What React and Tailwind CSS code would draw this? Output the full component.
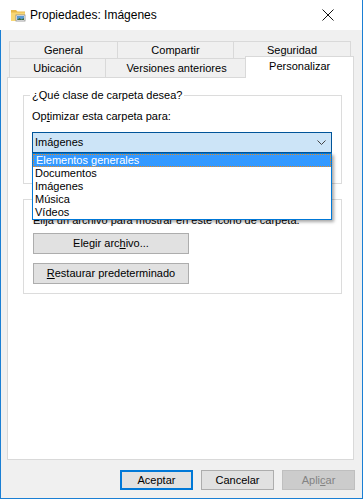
import React from "react";

const row1 = [
  { label: "General", w: "w-[109px]" },
  { label: "Compartir", w: "w-[117px]" },
  { label: "Seguridad", w: "w-[118px]" },
];

const items = ["Elementos generales", "Documentos", "Imágenes", "Música", "Vídeos"];

const FolderIcon = () => (
  <svg width="16" height="16" viewBox="0 0 16 16">
    <path d="M1 3h5l1.5 1.5H15V14H1z" fill="#e8b84a" />
    <path d="M1 5.5h14V14H1z" fill="#f8d775" />
    <rect x="6" y="8" width="9" height="6" fill="#fff" stroke="#8a8a8a" strokeWidth="0.8" />
    <rect x="7" y="9" width="7" height="4" fill="#5a9bd5" />
    <path d="M7 13l2.5-2 2 1.5L14 11v2z" fill="#3d6b3a" />
  </svg>
);

const Btn = ({ children, className = "" }) => (
  <div
    className={`h-[21px] w-[156px] flex items-center justify-center border border-[#adadad] bg-[#e1e1e1] ${className}`}
  >
    {children}
  </div>
);

export default function App() {
  return (
    <div className="w-[364px] h-[499px] bg-white flex font-['Liberation_Sans',Arial,sans-serif] text-[11px] text-black leading-[13px]">
      <div className="w-[363px] h-[499px] flex flex-col border-r border-b border-[#1a7fd4]">
        {/* title bar */}
        <div className="h-[30px] bg-white flex items-center pl-[10px] pr-[28px] shrink-0">
          <FolderIcon />
          <span className="ml-[4px] text-[12px] text-black">Propiedades: Imágenes</span>
          <div className="flex-1" />
          <svg width="12" height="12" viewBox="0 0 12 12">
            <path d="M0.5 0.5l11 11M11.5 0.5l-11 11" stroke="#111" strokeWidth="1" />
          </svg>
        </div>

        {/* body */}
        <div className="flex-1 bg-[#f0f0f0] border-l border-[#1a7fd4] flex flex-col pl-[6px] pr-[8px] pt-[11px] pb-[8px]">
          {/* tabs */}
          <div className="pl-[2px]">
            <div className="flex h-[17px]">
              {row1.map((t, i) => (
                <div
                  key={t.label}
                  className={`${t.w} h-[17px] border border-b-0 border-[#d9d9d9] flex items-center justify-center ${i > 0 ? "-ml-px" : ""}`}
                >
                  {t.label}
                </div>
              ))}
            </div>
            <div className="flex h-[19px] items-end">
              <div className="w-[97px] h-[19px] border border-b-0 border-[#d9d9d9] flex items-center justify-center">
                Ubicación
              </div>
              <div className="w-[144px] h-[19px] -ml-px border border-b-0 border-[#d9d9d9] flex items-center justify-center">
                Versiones anteriores
              </div>
              <div className="relative z-10 w-[109px] h-[22px] -ml-[3px] -mb-px bg-white border border-b-0 border-[#d9d9d9] flex items-start justify-center pt-[3px]">
                Personalizar
              </div>
            </div>
          </div>

          {/* panel */}
          <div className="h-[383px] bg-white border border-[#d9d9d9] pl-[15px] pt-[17px]">
            {/* group 1 */}
            <div className="relative w-[319px] h-[89px] border border-[#dcdcdc] pl-[8px] pt-[14px]">
              <span className="absolute -top-[7px] left-[6px] bg-white px-[2px]">¿Qué clase de carpeta desea?</span>
              <div>
                Op<span className="underline">t</span>imizar esta carpeta para:
              </div>
              <div className="relative mt-[9px] w-[300px] z-20">
                <div className="h-[21px] border border-[#005499] bg-[#cce4f7] flex items-center pl-[2px] pr-[5px]">
                  <span>Imágenes</span>
                  <div className="flex-1" />
                  <svg width="9" height="5" viewBox="0 0 9 5">
                    <path d="M0.5 0.5l4 4 4-4" stroke="#444" strokeWidth="1" fill="none" />
                  </svg>
                </div>
                <div className="absolute top-full left-0 w-[300px] h-[67px] bg-white border border-[#0078d7] shadow-[2px_2px_3px_rgba(0,0,0,0.35)]">
                  {items.map((it, i) => (
                    <div
                      key={it}
                      className={`h-[13px] flex items-center pl-[2px] ${
                        i === 0 ? "bg-[#3399ff] text-white border border-dotted border-[#e88a1f] pl-[1px]" : ""
                      }`}
                    >
                      {it}
                    </div>
                  ))}
                </div>
              </div>
            </div>

            {/* group 2 (legend hidden under the open list) */}
            <div className="relative mt-[15px] w-[319px] h-[95px] border border-[#dcdcdc] pl-[9px] pt-[14px]">
              <div>Elija un archivo para mostrar en este icono de carpeta.</div>
              <Btn className="mt-[6px]">
                <span>
                  Elegir arc<span className="underline">h</span>ivo...
                </span>
              </Btn>
              <Btn className="mt-[9px]">
                <span>
                  <span className="underline">R</span>estaurar predeterminado
                </span>
              </Btn>
            </div>
          </div>

          {/* buttons */}
          <div className="mt-[10px] flex justify-end gap-[8px] -mr-px">
            <div className="w-[73px] h-[20px] border-2 border-[#0078d7] bg-[#e1e1e1] flex items-center justify-center">
              Aceptar
            </div>
            <div className="w-[73px] h-[20px] border border-[#adadad] bg-[#e1e1e1] flex items-center justify-center">
              Cancelar
            </div>
            <div className="w-[73px] h-[20px] border border-[#bfbfbf] bg-[#cccccc] text-[#838383] flex items-center justify-center">
              <span>
                Apli<span className="underline">c</span>ar
              </span>
            </div>
          </div>
        </div>
      </div>
    </div>
  );
}
